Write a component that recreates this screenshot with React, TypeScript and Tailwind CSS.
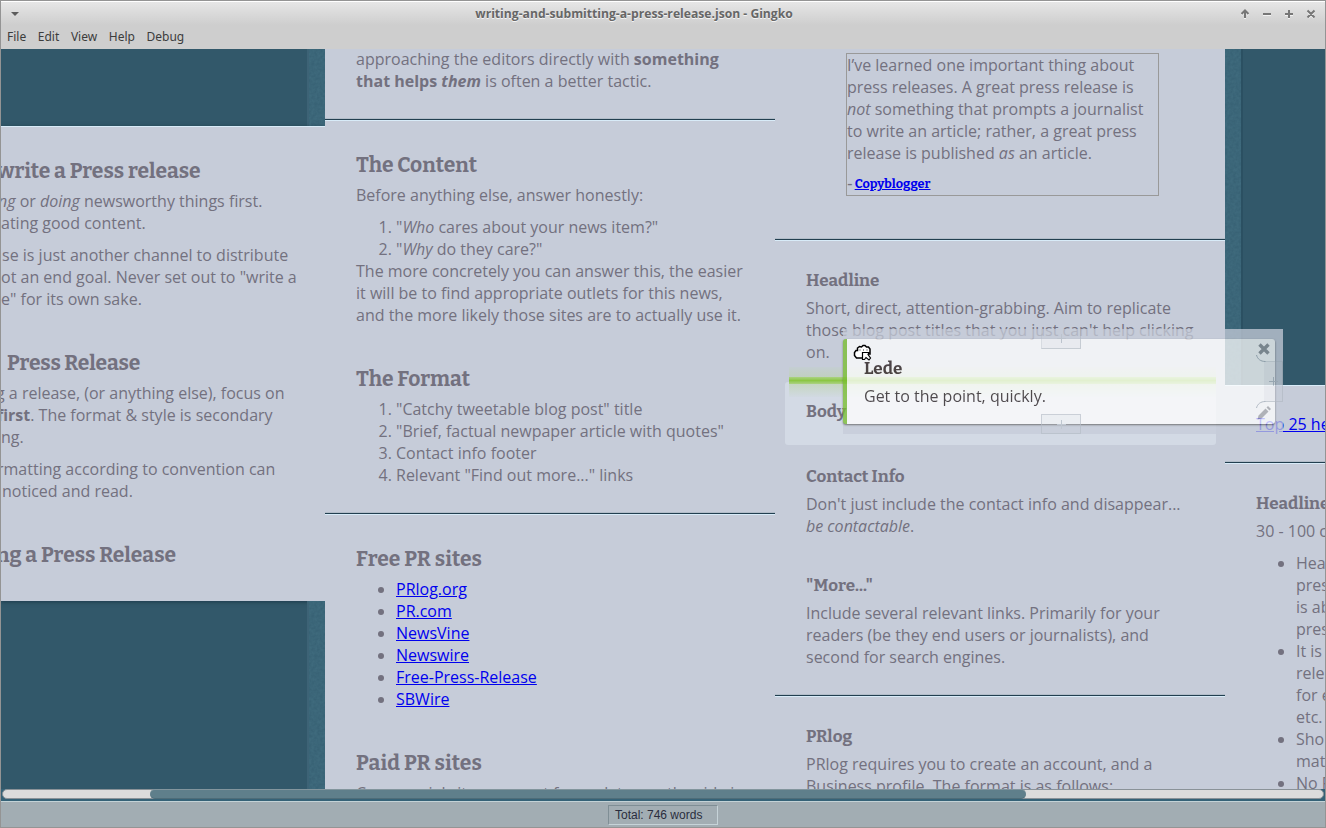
import React from "react";
import type { ReactNode } from "react";

type Kids = { children?: ReactNode; className?: string };

const H2 = ({ children, className = "" }: Kids) => (
  <h2 className={"h-[26px] whitespace-nowrap font-['Bitter','DejaVu_Serif_Condensed',serif] text-[21px] leading-[28px] font-bold " + className}>{children}</h2>
);
const H3 = ({ children, className = "" }: Kids) => (
  <h3 className={"h-[22px] whitespace-nowrap font-['Bitter','DejaVu_Serif_Condensed',serif] text-[17px] leading-[24px] font-bold " + className}>{children}</h3>
);
const P = ({ children, className = "" }: Kids) => (
  <div className={"whitespace-nowrap " + className}>{children}</div>
);
const L = ({ children, className = "" }: Kids) => (
  <div className={"h-[22px] " + className}>{children}</div>
);
const A = ({ children }: Kids) => <a className="text-[#0000ee] underline">{children}</a>;

const Divider = () => (
  <div className="h-[3px] shrink-0 border-b border-[#d8ebf8] bg-linear-to-b from-[#b2bdc9] from-50% to-[#223f50] to-50%" />
);

const Grain = () => (
  <svg className="h-full w-full opacity-25" preserveAspectRatio="none">
    <filter id="grain">
      <feTurbulence type="fractalNoise" baseFrequency="0.35" numOctaves="2" />
      <feColorMatrix values="0 0 0 0 0.1  0 0 0 0 0.25  0 0 0 0 0.32  1.5 0 0 0 -0.3" />
    </filter>
    <rect width="100%" height="100%" filter="url(#grain)" />
  </svg>
);

const Gutter = ({ className = "" }: Kids) => (
  <div className={"w-4 shrink-0 overflow-hidden bg-[#386275] " + className}><Grain /></div>
);

const LeftBackdrop = ({ className = "" }: Kids) => (
  <div className={"flex " + className}>
    <div className="flex-1" />
    <div className="w-[2px] bg-[#3d6376]" />
    <Gutter />
  </div>
);

function TitleBar() {
  return (
    <div className="flex h-[24px] shrink-0 items-center border-t border-white bg-linear-to-b from-[#e6e6e6] to-[#cecece]">
      <div className="flex w-[83px] pl-[10px]">
        <svg width="8" height="6" viewBox="0 0 8 6"><path d="M0 1h8L4 5z" fill="#5c5c5c" /></svg>
      </div>
      <div className="-ml-[57px] flex-1 text-center font-['Open_Sans',sans-serif] text-[12.150px] leading-5 font-bold text-[#666] [text-shadow:0_1px_0_#f4f4f4]">
        writing-and-submitting-a-press-release.json - Gingko
      </div>
      <svg width="84" height="20" viewBox="0 0 84 20" stroke="#777" strokeWidth="2" fill="none">
        <g stroke="#f3f3f3" transform="translate(0 1)"><path d="M4 14V7M0.500 10L4 6.500L7.500 10M22 10h8M44 10h8M48 6v8M67 7l6 6M73 7l-6 6" /></g>
        <path d="M4 14V7M0.500 10L4 6.500L7.500 10M22 10h8M44 10h8M48 6v8M66.500 6.500l7 7M73.500 6.500l-7 7" />
      </svg>
    </div>
  );
}

function Column1() {
  return (
    <div className="flex w-[324px] shrink-0 flex-col overflow-hidden">
      <LeftBackdrop className="h-[77px] shrink-0" />
      <div className="flex h-[475px] shrink-0 flex-col border-t border-[#d8ebf8] bg-[#c6ccd9] pt-[30px] shadow-[0_1px_4px_#1d3a4a]">
        <H2 className="-ml-[4px]">write a Press release</H2>
        <P className="mt-[7px]">
          <L className="-ml-[3px]"><i>ng</i> or <i>doing</i> newsworthy things first.</L>
          <L>ating good content.</L>
        </P>
        <P className="mt-[10px]">
          <L className="ml-[1px]">se is just another channel to distribute</L>
          <L>ot an end goal. Never set out to "write a</L>
          <L>e" for its own sake.</L>
        </P>
        <H2 className="mt-[39px] ml-[6px] tracking-[-0.150px]">Press Release</H2>
        <P className="mt-[7px]">
          <L className="-ml-[5px]">g a release, (or anything else), focus on</L>
          <L className="-ml-[4px]"><b>first</b>. The format &amp; style is secondary</L>
          <L>ng.</L>
        </P>
        <P className="mt-[10px]">
          <L className="-ml-[4px]">rmatting according to convention can</L>
          <L className="ml-[1px]">noticed and read.</L>
        </P>
        <H2 className="mt-[39px] -ml-[5px]">ng a Press Release</H2>
      </div>
      <LeftBackdrop className="flex-1" />
    </div>
  );
}

function Column2() {
  return (
    <div className="flex w-[450px] shrink-0 flex-col overflow-hidden bg-[#c6ccd9]">
      <div className="flex h-[69px] shrink-0 flex-col px-[31px]">
        <P className="-mt-[1px]">
          <L>approaching the editors directly with <b>something</b></L>
          <L><b>that helps <i>them</i></b> is often a better tactic.</L>
        </P>
      </div>
      <Divider />
      <div className="flex h-[391px] shrink-0 flex-col px-[31px] pt-[30px]">
        <H2>The Content</H2>
        <P className="mt-[7px]">Before anything else, answer honestly:</P>
        <ol className="mt-[10px] list-decimal pl-[40px]">
          <li>"<i>Who</i> cares about your news item?"</li>
          <li>"<i>Why</i> do they care?"</li>
        </ol>
        <P>
          <L>The more concretely you can answer this, the easier</L>
          <L>it will be to find appropriate outlets for this news,</L>
          <L>and the more likely those sites are to actually use it.</L>
        </P>
        <H2 className="mt-[39px]">The Format</H2>
        <ol className="mt-[7px] list-decimal pl-[40px] whitespace-nowrap">
          <li>"Catchy tweetable blog post" title</li>
          <li>"Brief, factual newpaper article with quotes"</li>
          <li>Contact info footer</li>
          <li>Relevant "Find out more..." links</li>
        </ol>
      </div>
      <Divider />
      <div className="flex shrink-0 flex-col px-[31px] pt-[30px]">
        <H2 className="tracking-[0.080px]">Free PR sites</H2>
        <ul className="mt-[7px] list-disc pl-[40px]">
          {["PRlog.org", "PR.com", "NewsVine", "Newswire", "Free-Press-Release", "SBWire"].map((s) => (
            <li key={s}><A>{s}</A></li>
          ))}
        </ul>
        <H2 className="mt-[39px] tracking-[0.120px]">Paid PR sites</H2>
        <P className="mt-[7px]">Commercial sites can cost for updates on the side in</P>
      </div>
    </div>
  );
}

function Column3() {
  return (
    <div className="flex w-[450px] shrink-0 flex-col overflow-hidden bg-[#c6ccd9]">
      <div className="flex h-[189px] shrink-0 flex-col pt-[4px] pl-[71px]">
        <blockquote className="h-[143px] w-[313px] border border-[#999]">
          <P>
            <L>I’ve learned one important thing about</L>
            <L>press releases. A great press release is</L>
            <L><i>not</i> something that prompts a journalist</L>
            <L>to write an article; rather, a great press</L>
            <L>release is published <i>as</i> an article.</L>
          </P>
          <div className="mt-[9px] flex h-[22px] gap-[2px] font-['Bitter','DejaVu_Serif_Condensed',serif] text-[12.700px] font-bold">
            <span>-</span><A>Copyblogger</A>
          </div>
        </blockquote>
      </div>
      <Divider />
      <div className="flex h-[453px] shrink-0 flex-col pt-[28px]">
        <H3 className="px-[31px]">Headline</H3>
        <P className="mt-[6px] px-[31px]">
          <L>Short, direct, attention-grabbing. Aim to replicate</L>
          <L>those blog post titles that you just can't help clicking</L>
          <L>on.</L>
        </P>
        <div className="relative z-10 mt-[4px] ml-[14px] flex h-[30px] w-[427px] shrink-0 flex-col bg-linear-to-b from-[#c1d2c4]/30 via-[#b9d3a0]/60 to-[#c1d2c4]/10 pt-[10px]">
          <div className="h-[7px] bg-linear-to-b from-[#abd281] via-[#8bc642] to-[#abd281]" />
        </div>
        <div className="-mt-[15px] ml-[10px] flex h-[63px] w-[431px] shrink-0 items-center rounded-[3px] bg-[#dfe8f2]/50 pl-[21px]">
          <H3 className="-mt-[5px]">Body</H3>
        </div>
        <H3 className="mt-[20px] px-[31px]">Contact Info</H3>
        <P className="mt-[6px] px-[31px]">
          <L>Don't just include the contact info and disappear...</L>
          <L><i>be contactable</i>.</L>
        </P>
        <H3 className="mt-[37px] px-[31px]">"More..."</H3>
        <P className="mt-[6px] px-[31px]">
          <L>Include several relevant links. Primarily for your</L>
          <L>readers (be they end users or journalists), and</L>
          <L>second for search engines.</L>
        </P>
      </div>
      <Divider />
      <div className="flex shrink-0 flex-col px-[31px] pt-[28px]">
        <H3>PRlog</H3>
        <P className="mt-[6px]">
          <L>PRlog requires you to create an account, and a</L>
          <L>Business profile. The format is as follows:</L>
        </P>
      </div>
    </div>
  );
}

function Column4() {
  return (
    <div className="flex w-[100px] shrink-0 flex-col overflow-hidden bg-[#c6ccd9]">
      <div className="flex h-[336px] shrink-0 bg-[#32586a]">
        <Gutter />
        <div className="w-[2px] bg-[#2b5062]" />
      </div>
      <div className="h-[76px] shrink-0 border-t border-[#d8ebf8] pt-[27px] pl-[31px] whitespace-nowrap">
        <A>Top 25 he</A>
      </div>
      <Divider />
      <div className="flex flex-col pt-[28px] pl-[31px] whitespace-nowrap">
        <H3>Headline</H3>
        <P className="mt-[6px]">30 - 100 c</P>
        <ul className="mt-[10px] list-disc pl-[40px]">
          <li><L>Hea</L><L>pres</L><L>is ab</L><L>pres</L></li>
          <li><L>It is</L><L>rele</L><L>for e</L><L>etc.</L></li>
          <li><L>Sho</L><L>mat</L></li>
          <li><L>No P</L></li>
        </ul>
      </div>
    </div>
  );
}

const PlusTab = ({ className = "" }: Kids) => (
  <div className={"absolute flex items-center justify-center border-r border-b border-[#a9b1ba]/60 bg-[#c6ccd9]/20 " + className}>
    <svg width="9" height="9" viewBox="0 0 9 9" stroke="#b9c1c9" strokeWidth="1"><path d="M4.500 0v9M0 4.500h9" /></svg>
  </div>
);

function DraggedCard() {
  return (
    <div className="absolute top-[328px] left-[842px] z-20 h-[105px] w-[440px] bg-[#c6ccd9] opacity-75">
      <div className="mt-[10px] h-[85px] w-[432px] rounded-[3px] border-l-[4px] border-[#76bd2b] bg-white pl-[17px] shadow-[0_1px_2px_#555]">
        <H3 className="pt-[18px] text-[#231616]">Lede</H3>
        <P className="mt-[24px] text-[#231a1c]">Get to the point, quickly.</P>
      </div>
      <PlusTab className="top-0 left-[198px] h-[20px] w-[40px] border-l border-l-[#a9b1ba]/30" />
      <PlusTab className="top-[85px] left-[198px] h-[20px] w-[40px] border-t border-l" />
      <PlusTab className="top-[32px] left-[421px] h-[41px] w-[19px] border-t border-t-[#a9b1ba]/30" />
      <svg className="absolute top-[14px] left-[412px]" width="28" height="82" viewBox="0 0 28 82" fill="none">
        <path d="M1.500 12c1 4 4 6.500 9 6.500M1.500 65c1-4 4-6.500 9-6.500" stroke="#aab4bd" />
        <path d="M4.500 1.500l9 9M13.500 1.500l-9 9" stroke="#909499" strokeWidth="3.400" />
        <path d="M2.500 76.500l1-4 7-7 3 3-7 7zM11.500 64.500l1.500-1.500 3 3-1.500 1.500z" fill="#a8aaad" />
      </svg>
    </div>
  );
}

export default function App() {
  return (
    <div className="relative flex h-[828px] w-[1326px] flex-col overflow-hidden border border-[#949494] bg-[#cecece] font-['Open_Sans','Noto_Sans',sans-serif] text-[16px] leading-[22px] text-[#73717f]">
      <TitleBar />
      <nav className="flex h-[24px] shrink-0 items-center gap-[11.600px] pl-[6px] font-['Noto_Sans',sans-serif] text-[12px] text-[#3c3c3c]">
        {["File", "Edit", "View", "Help", "Debug"].map((m) => <span key={m}>{m}</span>)}
      </nav>
      <main className="flex h-[740px] shrink-0 overflow-hidden bg-[#32586a]">
        <Column1 />
        <Column2 />
        <Column3 />
        <Column4 />
      </main>
      <div className="h-[12px] shrink-0 bg-[#356277] px-[1px]">
        <div className="h-[10px] rounded-full border border-[#8a9298] bg-[#dcdcdc]">
          <div className="-mt-px ml-[147px] h-[10px] w-[876px] rounded-full border-y border-t-[#82959d] border-b-[#4e6c78] bg-[#5f7f8b]" />
        </div>
      </div>
      <footer className="flex flex-1 items-center justify-center border-t border-[#c3d2d6] bg-[#a2adb3]">
        <div className="mt-[1px] flex h-[20px] w-[110px] items-center border border-t-[#7f8e95] border-r-[#c6d3d8] border-b-[#c6d3d8] border-l-[#7f8e95] pl-[6px] font-['Liberation_Sans',sans-serif] text-[12px] text-[#2a2d3e]">
          Total: 746 words
        </div>
      </footer>
      <DraggedCard />
      <svg className="absolute top-[343px] left-[852px] z-30" width="21" height="19" viewBox="0 0 21 19" stroke="#000" strokeWidth="1.500" fill="#fff">
        <path d="M5 14H3.500L1.500 11.500 1.500 8.500 3 6.500h1.500V4L6.500 2.500 8.500 3 10 1.500h2L13.500 3l2 0L17 5v5h-6v4z" />
        <path d="M7 5.500v1M10.500 5.500v1M14 5.500v1" strokeWidth="0.800" />
        <path d="M9.500 8.500h6.500l-1 2 2.500 3.500-1.500 2-3-2.500-1.500 2h-2z" strokeWidth="1.200" />
      </svg>
    </div>
  );
}
